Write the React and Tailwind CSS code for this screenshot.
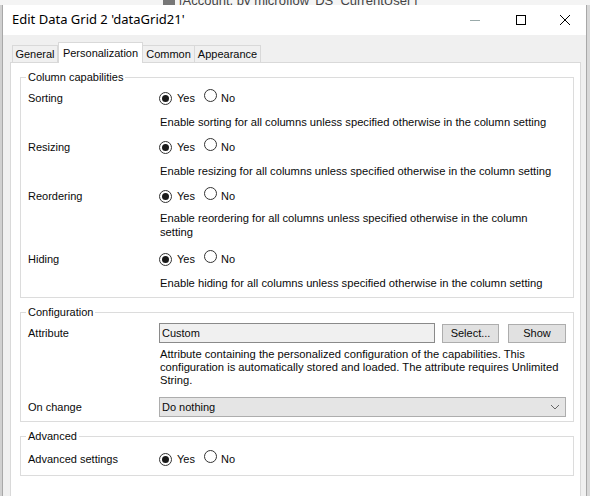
import React from "react";

function Radio({ checked }) {
  return (
    <span className="relative inline-flex h-[13px] w-[13px] items-center justify-center rounded-full border border-[#333] bg-white">
      {checked && <span className="h-[7px] w-[7px] rounded-full bg-[#1a1a1a]" />}
    </span>
  );
}

function YesNo() {
  return (
    <div className="flex items-center">
      <Radio checked />
      <span className="ml-[5px]">Yes</span>
      <span className="ml-[9px]"><Radio /></span>
      <span className="ml-[4px]">No</span>
    </div>
  );
}

function Group({ title, children, className = "" }) {
  return (
    <div className={"relative ml-[9px] mr-[6px] border border-[#dcdcdc] px-[7px] " + className}>
      <div className="absolute -top-[8px] left-[5px] bg-white px-[2px] leading-[14px]">{title}</div>
      {children}
    </div>
  );
}

function CapRow({ label, desc, descClass = "" }) {
  return (
    <div>
      <div className="flex h-[20px] items-center">
        <div className="w-[131px]">{label}</div>
        <YesNo />
      </div>
      <div className={"ml-[132px] text-[11.2px] leading-[14px] " + descClass}>{desc}</div>
    </div>
  );
}

export default function App() {
  return (
    <div
      className="relative h-[496px] w-[590px] overflow-hidden bg-[#e8e8e8] text-[11px] text-[#0a0a0a]"
      style={{ fontFamily: '"Liberation Sans", Arial, sans-serif' }}
    >
      {/* background app strip */}
      <div className="h-[5px] overflow-hidden bg-[#f4f4f4]">
        <div className="ml-[163px] -mt-[9px] flex items-center gap-[4px] text-[13px] text-[#444]">
          <span className="inline-block h-[12px] w-[12px] bg-[#777]" />
          <span>[Account, by microflow 'DS_CurrentUser']</span>
        </div>
      </div>
      <div className="flex h-[491px]">
        <div className="w-[2px] bg-[#d0d0d0]" />
        <div className="flex w-[585px] flex-col border-l border-r border-[#a8a8a8] bg-[#f0f0f0]">
          {/* title bar */}
          <div className="flex h-[30px] items-center bg-white">
            <div className="ml-[9px] text-[13px] text-black" style={{ fontFamily: '"Noto Sans", "Liberation Sans", sans-serif' }}>
              Edit Data Grid 2 'dataGrid21'
            </div>
            <div className="ml-auto flex items-center">
              <div className="flex w-[46px] justify-center">
                <div className="h-[1px] w-[10px] bg-[#9aa]" />
              </div>
              <div className="flex w-[46px] justify-center">
                <div className="h-[10px] w-[10px] border border-black" />
              </div>
              <div className="flex w-[42px] justify-center">
                <svg width="12" height="12" viewBox="0 0 12 12">
                  <path d="M1 1L11 11M11 1L1 11" stroke="#000" strokeWidth="1" />
                </svg>
              </div>
            </div>
          </div>
          {/* tabs */}
          <div className="ml-[9px] mt-[7px] flex items-end">
            <div className="flex h-[17px] w-[46px] items-center justify-center border border-b-0 border-[#d9d9d9] bg-[#f0f0f0]">General</div>
            <div className="relative -mb-[1px] flex h-[21px] w-[85px] items-start justify-center border border-b-0 border-[#d9d9d9] bg-white pt-[2px]">Personalization</div>
            <div className="flex h-[17px] w-[52px] items-center justify-center border border-b-0 border-l-0 border-[#d9d9d9] bg-[#f0f0f0]">Common</div>
            <div className="flex h-[17px] w-[66px] items-center justify-center border border-b-0 border-l-0 border-[#d9d9d9] bg-[#f0f0f0]">Appearance</div>
          </div>
          {/* panel */}
          <div className="ml-[7px] mr-[5px] flex-1 border border-b-0 border-[#d9d9d9] bg-white pt-[14px]">
            <Group title="Column capabilities" className="pt-[10px] pb-[7px]">
              <CapRow label="Sorting" desc="Enable sorting for all columns unless specified otherwise in the column setting" descClass="mt-[7px]" />
              <div className="h-[8px]" />
              <CapRow label="Resizing" desc="Enable resizing for all columns unless specified otherwise in the column setting" descClass="mt-[7px]" />
              <div className="h-[8px]" />
              <CapRow label="Reordering" desc={<>Enable reordering for all columns unless specified otherwise in the column<br />setting</>} descClass="mt-[5px] w-[400px]" />
              <div className="h-[10px]" />
              <CapRow label="Hiding" desc="Enable hiding for all columns unless specified otherwise in the column setting" descClass="mt-[7px]" />
            </Group>
            <Group title="Configuration" className="mt-[14px] pt-[10px] pb-[4px]">
              <div className="flex h-[20px] items-center">
                <div className="w-[131px]">Attribute</div>
                <div className="flex h-[20px] w-[276px] items-center border border-[#8a8a8a] bg-[#f0f0f0] px-[2px]">Custom</div>
                <div className="ml-[7px] flex h-[19px] w-[57px] items-center justify-center border border-[#adadad] bg-[#e1e1e1]">Select...</div>
                <div className="ml-[9px] flex h-[19px] w-[58px] items-center justify-center border border-[#adadad] bg-[#e1e1e1]">Show</div>
              </div>
              <div className="ml-[132px] mt-[5px] w-[402px] text-[11.2px] leading-[13px]">
                Attribute containing the personalized configuration of the capabilities. This configuration is automatically stored and loaded. The attribute requires Unlimited String.
              </div>
              <div className="mt-[10px] flex h-[20px] items-center">
                <div className="w-[131px]">On change</div>
                <div className="flex h-[20px] w-[407px] items-center justify-between border border-[#adadad] bg-[#e5e5e5] px-[2px]">
                  <span>Do nothing</span>
                  <svg width="10" height="6" viewBox="0 0 10 6" className="mr-[3px]">
                    <path d="M1 1L5 5L9 1" fill="none" stroke="#666" strokeWidth="1" />
                  </svg>
                </div>
              </div>
            </Group>
            <Group title="Advanced" className="mt-[14px] pt-[12px] pb-[6px]">
              <div className="flex h-[20px] items-center">
                <div className="w-[131px]">Advanced settings</div>
                <YesNo />
              </div>
            </Group>
          </div>
        </div>
        <div className="flex-1 bg-[#d8d8d8]" />
      </div>
    </div>
  );
}
